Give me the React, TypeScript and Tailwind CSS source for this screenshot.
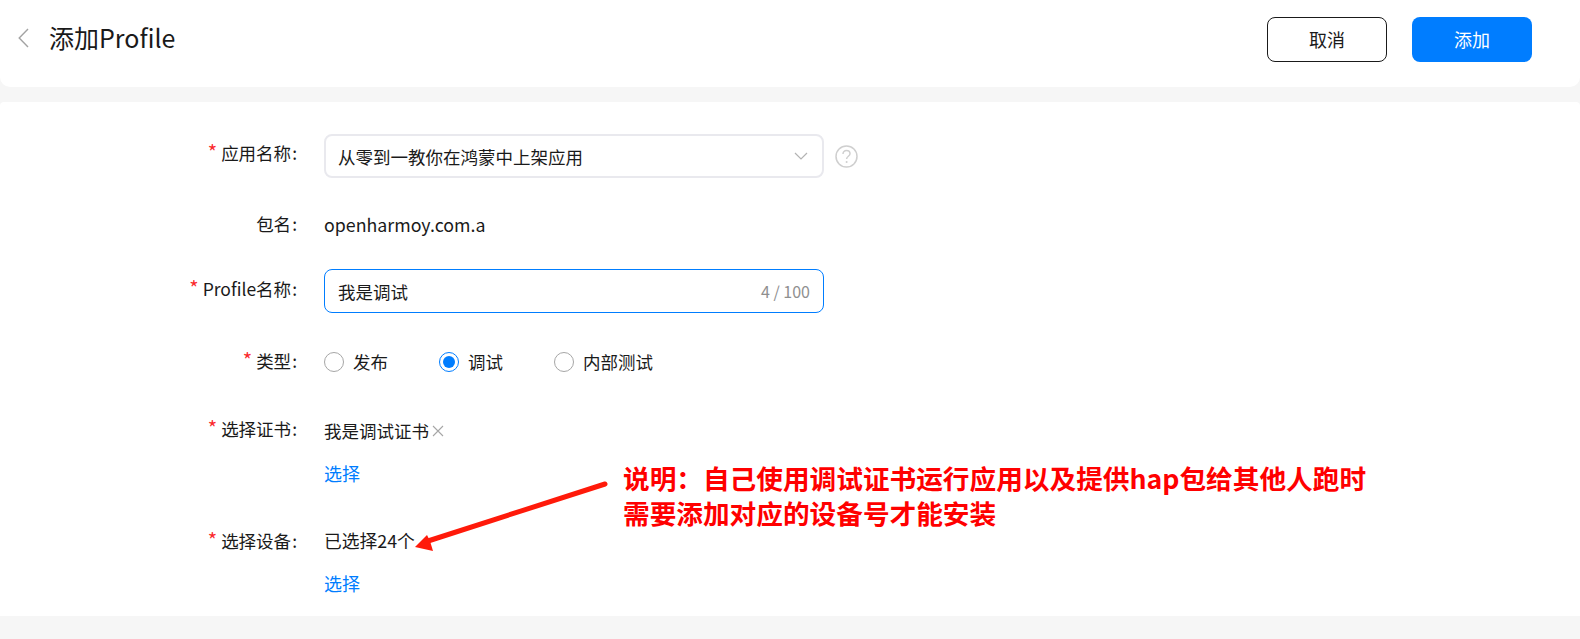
import React from 'react';

const font = 'font-["Noto_Sans_CJK_SC","Noto_Sans",sans-serif]';

function Label({ text, required = true }: { text: string; required?: boolean }) {
  return (
    <div className="w-[297px] shrink-0 text-right text-[17.5px] leading-[24px] text-[#1a1a1a]">
      {required && <span className="mr-[4px] text-[20px] leading-[20px] text-[#fa2a2d]">*</span>}
      {text}
      <span className="ml-[1px]">:</span>
    </div>
  );
}

function Radio({ label, checked = false, className = '' }: { label: string; checked?: boolean; className?: string }) {
  return (
    <div className={`flex items-center ${className}`}>
      {checked ? (
        <span className="flex h-[20px] w-[20px] items-center justify-center rounded-full border border-[#007dff]">
          <span className="h-[12px] w-[12px] rounded-full bg-[#007dff]" />
        </span>
      ) : (
        <span className="h-[20px] w-[20px] rounded-full border border-[#a6a6a6]" />
      )}
      <span className="ml-[9px] text-[17.5px] leading-[24px] text-[#1a1a1a]">{label}</span>
    </div>
  );
}

export default function App() {
  return (
    <div className={`relative h-[639px] w-[1580px] overflow-hidden bg-[#f6f6f6] ${font}`}>
      <header className="flex h-[87px] items-start justify-between rounded-b-[10px] bg-white">
        <div className="flex items-center pt-[19px]">
          <svg className="ml-[18px] mt-[2px]" width="11" height="20" viewBox="0 0 11 20" fill="none">
            <path d="M10 1 L1.2 10 L10 19" stroke="#a3a3a3" strokeWidth="1.4" />
          </svg>
          <h1 className="ml-[20px] text-[25px] leading-[36px] font-normal text-[#1a1a1a]">添加Profile</h1>
        </div>
        <div className="mr-[48px] mt-[17px] flex gap-[25px]">
          <button className="h-[45px] w-[120px] rounded-[8px] border border-[#1a1a1a] bg-white text-[18px] text-[#1a1a1a]">
            取消
          </button>
          <button className="h-[45px] w-[120px] rounded-[8px] bg-[#007dff] text-[18px] text-white">添加</button>
        </div>
      </header>

      <main className="mt-[15px] h-[514px] rounded-t-[4px] bg-white pt-[32px]">
        <div className="flex items-start gap-[27px]">
          <div className="pt-[7px]">
            <Label text="应用名称" />
          </div>
          <div className="flex h-[44px] w-[500px] items-center justify-between rounded-[8px] border-2 border-[#e9e9ee] pl-[12px] pr-[14px] text-[17.5px] text-[#1a1a1a]">
            <span className="pt-[2px]">从零到一教你在鸿蒙中上架应用</span>
            <svg width="14" height="8" viewBox="0 0 14 8" fill="none">
              <path d="M1 1 L7 7 L13 1" stroke="#b3b3b3" strokeWidth="1.2" />
            </svg>
          </div>
          <svg className="ml-[-16px] mt-[11px]" width="23" height="23" viewBox="0 0 23 23" fill="none">
            <circle cx="11.5" cy="11.5" r="10.5" stroke="#cfcfcf" strokeWidth="1.5" />
            <path d="M8 9 C8 6.8 9.5 5.6 11.5 5.6 C13.5 5.6 15 6.9 15 8.8 C15 11.2 11.6 11.4 11.6 14" stroke="#cfcfcf" strokeWidth="1.5" />
            <circle cx="11.6" cy="17" r="1" fill="#cfcfcf" />
          </svg>
        </div>

        <div className="mt-[34px] flex items-center gap-[27px]">
          <Label text="包名" required={false} />
          <span className="text-[17.8px] leading-[24px] text-[#1a1a1a]">openharmoy.com.a</span>
        </div>

        <div className="mt-[33px] flex items-start gap-[27px]">
          <div className="pt-[8px]">
            <Label text="Profile名称" />
          </div>
          <div className="flex h-[44px] w-[500px] items-center justify-between rounded-[8px] border-[1.5px] border-[#007dff] pl-[13px] pr-[13px] text-[17.5px] text-[#1a1a1a]">
            <span className="pt-[2px]">我是调试</span>
            <span className="text-[16px] text-[#8f8f8f]">4 / 100</span>
          </div>
        </div>

        <div className="mt-[36px] flex items-center gap-[27px]">
          <div className="mb-[2px]">
            <Label text="类型" />
          </div>
          <div className="flex items-center">
            <Radio label="发布" />
            <Radio label="调试" checked className="ml-[51px]" />
            <Radio label="内部测试" className="ml-[51px]" />
          </div>
        </div>

        <div className="mt-[42px] flex items-start gap-[27px]">
          <Label text="选择证书" />
          <div>
            <div className="flex items-center pt-[2px] text-[17.5px] leading-[24px] text-[#1a1a1a]">
              我是调试证书
              <svg className="ml-[3px]" width="12" height="12" viewBox="0 0 12 12" fill="none">
                <path d="M1 1 L11 11 M11 1 L1 11" stroke="#a6a6a6" strokeWidth="1.1" />
              </svg>
            </div>
            <div className="mt-[18px] text-[18px] leading-[24px] text-[#007dff]">选择</div>
          </div>
        </div>

        <div className="mt-[44px] flex items-start gap-[27px]">
          <Label text="选择设备" />
          <div>
            <div className="mt-[-1px] text-[17.8px] leading-[24px] text-[#1a1a1a]">已选择24个</div>
            <div className="mt-[19px] text-[18px] leading-[24px] text-[#007dff]">选择</div>
          </div>
        </div>
      </main>

      {/* annotation drawn over the form */}
      <svg className="absolute left-0 top-0" width="1580" height="639" fill="none">
        <path d="M605 484 L428 541" stroke="#ff1a0a" strokeWidth="5" strokeLinecap="round" />
        <path d="M415 547 L427 535 L430 541 L433 551 Z" fill="#ff1a0a" />
      </svg>
      <div className="absolute left-[623px] top-[460px] text-[26.67px] leading-[35px] font-bold whitespace-nowrap text-[#ff0000]">
        <div>说明：自己使用调试证书运行应用以及提供hap包给其他人跑时</div>
        <div>需要添加对应的设备号才能安装</div>
      </div>
    </div>
  );
}
